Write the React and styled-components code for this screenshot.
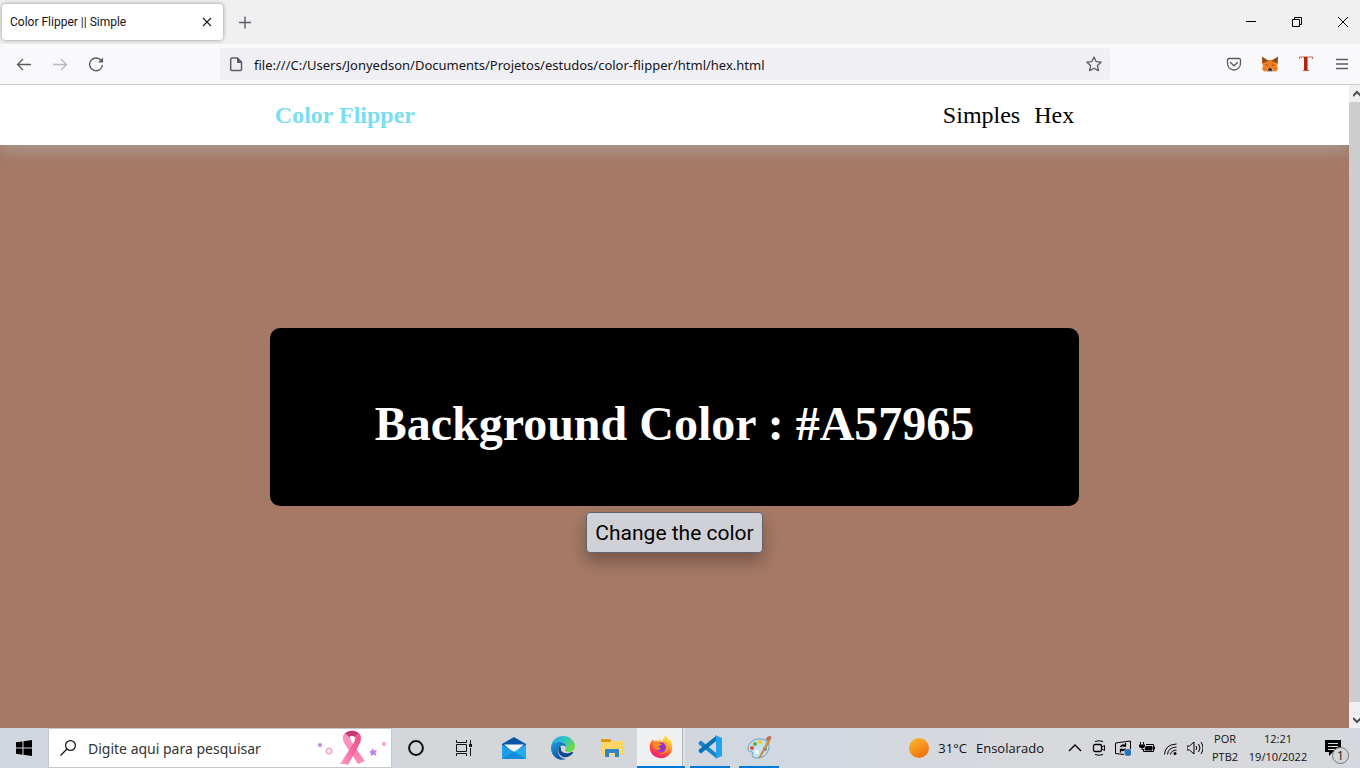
import React, { useState } from "react";
import styled, { createGlobalStyle } from "styled-components";

const GlobalStyle = createGlobalStyle`
  * { box-sizing: border-box; }
  body { margin: 0; background: #fff; font-family: "Open Sans", "Noto Sans", sans-serif; }
  button { border: 0; padding: 0; margin: 0; background: none; font: inherit; color: inherit; cursor: pointer; }
  input { border: 0; padding: 0; margin: 0; background: none; outline: 0; }
  svg { display: block; flex: none; }
`;

const Desktop = styled.div`
  display: flex;
  flex-direction: column;
  height: 100vh;
  padding-bottom: 6px;
  overflow: hidden;
`;

/* Browser chrome */
const TitleBar = styled.header`
  display: flex;
  align-items: center;
  flex: none;
  height: 44px;
  padding: 0 1px 0 2px;
  background: #f0f0f0;
`;
const Tab = styled.div`
  display: flex;
  align-items: center;
  width: 221px;
  height: 36px;
  padding: 0 8px;
  border-radius: 4px;
  background: #fff;
  box-shadow: 0 0 4px rgba(0, 0, 0, 0.4);
`;
const TabTitle = styled.span`
  flex: 1;
  font-family: Roboto, sans-serif;
  font-size: 12px;
  color: #15141a;
  white-space: nowrap;
`;
const IconButton = styled.button`
  display: flex;
  align-items: center;
  justify-content: center;
  flex: none;
  width: ${(p) => p.$size || 32}px;
  height: ${(p) => p.$size || 32}px;
  color: ${(p) => p.$color || "#5b5b66"};
`;
const NewTab = styled(IconButton)`
  margin-left: 6px;
`;
const WindowControls = styled.div`
  display: flex;
  gap: 14px;
  margin-left: auto;
`;
const ToolBar = styled.div`
  display: flex;
  align-items: center;
  flex: none;
  height: 41px;
  padding: 0 2px 0 8px;
  background: #f9f9fb;
  border-bottom: 1px solid #ccccd0;
`;
const ToolGroup = styled.div`
  display: flex;
  gap: 4px;
`;
const AddressBar = styled.label`
  display: flex;
  align-items: center;
  flex: 1;
  height: 32px;
  margin: 0 108px;
  border-radius: 4px;
  background: #f0f0f4;
  color: #5b5b66;
`;
const AddressInput = styled.input`
  flex: 1;
  min-width: 0;
  margin-left: 2px;
  padding-top: 2px;
  font-family: "Noto Sans", sans-serif;
  font-size: 13px;
  color: #15141a;
`;

/* Web page */
const Viewport = styled.div`
  display: flex;
  flex: 1;
  min-height: 0;
`;
const Page = styled.div`
  display: flex;
  flex-direction: column;
  flex: 1;
  background: #a57965;
  font-family: "Liberation Serif", serif;
`;
const NavBar = styled.nav`
  flex: none;
  background: #fff;
  box-shadow: 0 5px 15px rgba(176, 176, 176, 0.6);
  clip-path: inset(0 0 -24px 0);
`;
const NavContent = styled.div`
  display: flex;
  align-items: center;
  justify-content: space-between;
  width: 60%;
  height: 60px;
  margin: 0 auto;
  padding: 0 5px;
  font-size: 24px;
`;
const Brand = styled.span`
  font-weight: bold;
  color: #79def0;
`;
const NavLinks = styled.div`
  display: flex;
  gap: 14px;
`;
const NavLink = styled.a`
  color: #000;
  text-decoration: none;
`;
const Main = styled.main`
  display: flex;
  flex-direction: column;
  align-items: center;
  justify-content: center;
  flex: 1;
  gap: 6px;
  padding-top: 8px;
`;
const ColorCard = styled.section`
  display: flex;
  align-items: center;
  justify-content: center;
  width: 60%;
  height: 178px;
  padding-top: 14px;
  border-radius: 10px;
  background: #000;
`;
const ColorTitle = styled.h1`
  margin: 0;
  font-size: 48px;
  line-height: 56px;
  color: #fff;
  white-space: nowrap;
`;
const ChangeButton = styled.button`
  height: 41px;
  padding: 0 8px;
  border: 1px solid #64646e;
  border-radius: 4px;
  background: #d0d0d7;
  box-shadow: 0 8px 16px rgba(0, 0, 0, 0.3);
  font-family: Roboto, sans-serif;
  font-size: 21px;
  color: #000;
`;
const ScrollBar = styled.div`
  display: flex;
  flex-direction: column;
  flex: none;
  width: 11px;
  overflow: hidden;
  background: #f0f0f0;
`;
const ScrollThumb = styled.div`
  flex: 1;
  margin-bottom: 9px;
  background: #cdcdcd;
`;
const ScrollArrow = styled.button`
  display: flex;
  align-items: center;
  flex: none;
  height: 17px;
  padding-left: 4px;
  color: #505050;
`;

/* Taskbar */
const TaskBar = styled.footer`
  display: flex;
  align-items: center;
  flex: none;
  height: 40px;
  background: linear-gradient(90deg, #d0d7e0 0%, #d3d6da 28%, #d4d6d8 42%, #d1d8e2 57%, #d5d8dd 68%, #d8d9dc 85%, #d5d8dc 100%);
  color: #111;
  font-size: 13px;
`;
const StartButton = styled.button`
  display: flex;
  align-items: center;
  justify-content: center;
  width: 48px;
  height: 40px;
`;
const SearchBox = styled.label`
  display: flex;
  align-items: center;
  width: 344px;
  height: 40px;
  padding: 0 4px 0 11px;
  border: 1px solid #c4c6c8;
  background: #fff;
`;
const SearchInput = styled.input`
  flex: 1;
  min-width: 0;
  margin-left: 12px;
  font-family: "Noto Sans", sans-serif;
  font-size: 14px;
  color: #333;
  &::placeholder { color: #333; opacity: 1; }
`;
const Apps = styled.div`
  display: flex;
  margin-left: -1px;
`;
const AppButton = styled.button`
  display: flex;
  align-items: center;
  justify-content: center;
  width: 49px;
  height: 40px;
  background: ${(p) =>
    p.$active
      ? "linear-gradient(90deg, transparent 1px, #eef0f2 1px, #eef0f2 46px, #b4b8be 46px, #b4b8be 47px, #dde2e8 47px)"
      : "none"};
`;
const Running = styled.span`
  display: flex;
  align-items: center;
  justify-content: center;
  width: ${(p) => (p.$active ? "48px" : "40px")};
  flex: none;
  height: 40px;
  border-bottom: 2px solid #0078d7;
`;
const Weather = styled.button`
  display: flex;
  align-items: center;
  gap: 9px;
  margin-left: auto;
  margin-right: 19px;
  white-space: nowrap;
`;
const TrayIcons = styled.div`
  display: flex;
`;
const TrayText = styled.button`
  width: ${(p) => p.$width}px;
  font-family: "Open Sans", sans-serif;
  font-size: 11px;
  line-height: 18px;
  text-align: center;
  white-space: nowrap;
`;
const Notifications = styled.button`
  display: flex;
  position: relative;
  width: 30px;
  height: 40px;
  margin-left: 10px;
  margin-right: 7px;
  padding: 12px 0 0 2px;
`;
const Badge = styled.span`
  position: absolute;
  left: 9px;
  top: 19px;
  width: 17px;
  height: 17px;
  border: 1px solid #777;
  border-radius: 50%;
  background: #d3d5d8;
  font-size: 12px;
  line-height: 15px;
  text-align: center;
`;

const Icon = ({ size = 16, box = 16, width = 1, children }) => (
  <svg width={size} height={size} viewBox={`0 0 ${box} ${box}`} fill="none" stroke="currentColor" strokeWidth={width} aria-hidden="true">
    {children}
  </svg>
);

const Fox = () => (
  <svg width="18" height="18" viewBox="0 0 18 18" aria-hidden="true">
    <path d="M1 2 7 5h4l6-3 0 6-1 3 1 3-2 2.500-3-.5-1 1H7l-1-1-3 .5L1 14l1-3-1-3z" fill="#ed7d25" />
    <path d="M1 1.500 7.500 6 5 7 1.500 8zM17 1.500 10.500 6 13 7l3.500 1z" fill="#8c4a25" />
    <path d="m2 8 4 .5L7.500 13 2 11zM16 8l-4 .5L10.500 13l5.500-2z" fill="#f6851b" />
    <path d="m4 9 3 1-.5 1.500zM14 9l-3 1 .5 1.500z" fill="#8a4c24" />
    <path d="m6 14 1-1h4l1 1-1 3H7z" fill="#d7b99b" />
    <path d="m7 14 1-.7h2l1 .7-.3 1.800H7.300z" fill="#241b20" />
  </svg>
);

const Ribbon = () => (
  <svg width="70" height="36" viewBox="0 0 70 36" aria-hidden="true">
    <defs>
      <linearGradient id="rib" x1="0" y1="0" x2="1" y2="1">
        <stop offset="0" stopColor="#f0639b" /><stop offset="1" stopColor="#ff94c1" />
      </linearGradient>
      <linearGradient id="ribFront" x1="1" y1="0" x2="0" y2="1">
        <stop offset="0" stopColor="#e8518c" /><stop offset=".5" stopColor="#f4689f" /><stop offset="1" stopColor="#ffa0cb" />
      </linearGradient>
    </defs>
    <path d="M28 3q-4 5 0 11l13 20 7-3-13-18q-3-5-2-8z" fill="url(#rib)" />
    <path d="M28 3q-4 5 0 11l4 6 4-6q-4-5-3-9z" fill="#ff8fbe" />
    <path d="M28 3q7-5 14 0l-4 4q-3-2-6 0z" fill="#c63a72" />
    <path d="M42 3q4 5 0 12L31 35l-3-1-5 0 13-20q3-5 2-8z" fill="url(#ribFront)" />
    <circle cx="3" cy="15" r="2" fill="#bf83e8" />
    <circle cx="12" cy="21" r="2.700" fill="none" stroke="#ffa0c9" strokeWidth="1.600" />
    <path d="m55 18 2 2.500 3-.5-1.500 3 1 3-3-1.500-2.500 1.500-.2-3-2-1.300 2.700-.7z" fill="#bd83ea" />
    <circle cx="67" cy="14" r="2" fill="#ff9bca" />
  </svg>
);

const Mail = () => (
  <svg width="24" height="24" viewBox="0 0 24 24" aria-hidden="true">
    <path d="M0 8 12 1l12 7v2L12 19 0 10z" fill="#0756a8" />
    <path d="M2 8.500h20L12 17z" fill="#f5f6f8" />
    <path d="M0 8.500 24 23H0z" fill="#1f9ee9" />
    <path d="M24 8.500 0 23h24z" fill="#28aaf0" />
    <path d="m0 23 12-7.500L24 23z" fill="#168bdc" />
  </svg>
);

const Edge = () => (
  <svg width="24" height="24" viewBox="0 0 24 24" aria-hidden="true">
    <defs>
      <linearGradient id="edgeTop" x1="0" y1="0" x2="1" y2=".6">
        <stop offset="0" stopColor="#25a8e4" /><stop offset=".5" stopColor="#2bc3c9" /><stop offset="1" stopColor="#6edb45" />
      </linearGradient>
      <linearGradient id="edgeLow" x1="0" y1="0" x2=".8" y2="1">
        <stop offset="0" stopColor="#1ca0df" /><stop offset="1" stopColor="#0c479c" />
      </linearGradient>
    </defs>
    <path d="M0 12C0 5 5 0 12 0s12 5 12 10c0 4-3 6-6 6-3 0-4-1-4-2s1-1 1-3c0-3-3-5-7-5-5 0-8 3-8 6z" fill="url(#edgeTop)" />
    <path d="M0 12c0-4 3-6 8-6 4 0 7 2 7 5-1-1-2-1.500-3-1.500-3 0-5 2.500-5 5.500 0 5 4 8 8 8-8 3-15-3-15-11z" fill="url(#edgeLow)" />
    <path d="M9 10c-3 3-2 9 3 11 4 1 8-1 10-4 .5-1-.3-1.300-1-1-7 3-12 0-11-4z" fill="#104a91" />
  </svg>
);

const Folder = () => (
  <svg width="22" height="20" viewBox="0 0 22 20" aria-hidden="true">
    <path d="M0 1.500Q0 1 1 1h8l1.500 2L9 5H0z" fill="#d99b0b" />
    <path d="M0 4h9l2-1h10q1 0 1 1v13H0z" fill="#ffd766" />
    <path d="M4 19v-7q0-1 1-1h12q1 0 1 1v7h-4v-4H8v4z" fill="#2f84c8" />
  </svg>
);

const Firefox = () => (
  <svg width="24" height="24" viewBox="0 0 24 24" aria-hidden="true">
    <defs>
      <linearGradient id="ff" x1=".8" y1="0" x2=".3" y2="1">
        <stop offset="0" stopColor="#fff24f" /><stop offset=".35" stopColor="#ffb42e" /><stop offset=".65" stopColor="#ff5135" /><stop offset="1" stopColor="#ec168b" />
      </linearGradient>
      <radialGradient id="ffGlobe"><stop offset="0" stopColor="#6c35df" /><stop offset="1" stopColor="#a738c9" /></radialGradient>
    </defs>
    <path d="M4 4q0 2 1 2 2-1 4 0 2-2 3-2-1 2 0 3 3-3 4-7 3 2 4 6 1-1 1-2c3 5 3 11 0 15-5 6-14 5-18 0C-.5 14 0 8 4 4z" fill="url(#ff)" />
    <path d="M8 9q3-3 7-1 3 2 2 6-2 4-6 3-4-1-4-4z" fill="url(#ffGlobe)" />
    <path d="M4.500 7.500q4-1 5.500 1l3 .5q-1 2-3.500 2 .5 2 2.500 2.500-2 2.500-6 .5-3-2-1.500-6.500z" fill="#ff8a24" />
    <path d="M16 6q5 5 2 10-3 4-8 3 8-1 7-8-1-2-3-4z" fill="#ffa02e" />
  </svg>
);

const Code = () => (
  <svg width="24" height="24" viewBox="0 0 24 24" aria-hidden="true">
    <path d="m1 7 2-1.500L18 18v5L1 9.500Q0 8.500 1 7z" fill="#1683ca" />
    <path d="m1 17 2 1.500L18 6V1L1 14.500Q0 15.500 1 17z" fill="#0872b5" />
    <path d="M17 0l7 3v18l-7 3q1-1 1-3V3q0-2-1-3z" fill="#23a2ec" />
  </svg>
);

const Paint = () => (
  <svg width="26" height="24" viewBox="0 0 26 24" aria-hidden="true">
    <path d="M2 14C2 7 9 3 16 4c7 1 9 8 5 14-3 5-11 6-14 4-2-2 1-4-1-5-2-1-4 0-4-3z" fill="#c7e2ef" stroke="#6d9fba" />
    <circle cx="6" cy="13" r="2" fill="#e04b32" /><circle cx="9" cy="9" r="2" fill="#62ac3b" />
    <circle cx="14" cy="7" r="2" fill="#f0c532" /><circle cx="19" cy="14" r="2" fill="#4d8bd2" /><circle cx="11" cy="17" r="2" fill="#f4fbff" />
    <path d="m22 5 2 1-10 17-1-.5z" fill="#e89a3e" stroke="#b86e24" strokeWidth=".6" />
    <path d="M20 5q0-4 5-4 1 3-2 5z" fill="#b17746" />
  </svg>
);

const trayIcons = [
  ["Show hidden icons", <path d="m2 11 6-6 6 6" strokeWidth="1.300" />],
  ["Meet now", <g><rect x="2.500" y="4.500" width="8" height="7" rx="1.500" strokeWidth="1.300" /><path d="m11 7 2.500-1.500v5L11 9M4 1.500q4-1.500 8 0M4 14.500q4 1.500 8 0" /></g>],
  ["Updates", <g><path d="M9 14.500 .500 13.500V3L15.500 1v8" /><path d="M5.500 7q1.500-3 4.500-1.500M10.500 3v3h-3M10.500 8.500Q9 11.500 6 10M5.500 12.500v-3h3" strokeWidth="1.300" /><circle cx="13" cy="12.500" r="3.500" fill="#2674bc" stroke="none" /></g>],
  ["Battery", <g><path d="M7 4.500h7.500v7h-10V9" /><path d="M7 6.500h6v3.500H6z" fill="currentColor" /><path d="M15.500 6.500v3M1.500 2v2.500M4.500 2v2.500" /><path d="M0 4.500h6V6q0 2-3 2T0 6z" fill="currentColor" stroke="none" /><path d="M3 7v2.500h2" /></g>],
  ["Network", <g><path d="M1.500 14.500Q2 4.500 13.500 4M4.500 14.500Q5 7.500 13.500 7M7.500 14.500Q8 10.500 13.500 10" /><circle cx="12" cy="13.500" r="1.500" fill="currentColor" stroke="none" /></g>],
  ["Volume", <path d="M0 6h2.500L7 2v12l-4.500-4H0zM9 6q1.500 2 0 4M11.500 4q3 4 0 8M14 2q4 6 0 12" />],
];

const makeHex = () => {
  const n = Math.floor(Math.random() * 0x1000000);
  return `#${n.toString(16).padStart(6, "0").toUpperCase()}`;
};

export default function App() {
  const [color, setColor] = useState("#A57965");
  return (
    <Desktop>
      <GlobalStyle />
      <TitleBar>
        <Tab>
          <TabTitle>Color Flipper || Simple</TabTitle>
          <IconButton $size={16} $color="#222" aria-label="Close tab">
            <Icon><path d="m4 4 8 8m0-8-8 8" strokeWidth="1.200" /></Icon>
          </IconButton>
        </Tab>
        <NewTab aria-label="New tab"><Icon width={1.4}><path d="M8 2.500v12M2 8.500h12" /></Icon></NewTab>
        <WindowControls>
          <IconButton $color="#000" aria-label="Minimize"><Icon><path d="M3 7.500h10" /></Icon></IconButton>
          <IconButton $color="#000" aria-label="Restore"><Icon><path d="M3.500 5.500h7v7h-7zM5.500 5.500v-2h7v7h-2" /></Icon></IconButton>
          <IconButton $color="#000" aria-label="Close"><Icon><path d="m3 3 10 10m0-10L3 13" /></Icon></IconButton>
        </WindowControls>
      </TitleBar>
      <ToolBar>
        <ToolGroup>
          <IconButton aria-label="Back"><Icon width={1.3}><path d="M15 8.500H1.500M7 3 1.500 8.500 7 14" /></Icon></IconButton>
          <IconButton $color="#b9b9be" aria-label="Forward"><Icon width={1.3}><path d="M1 8.500h13.500M9 3l5.500 5.500L9 14" /></Icon></IconButton>
          <IconButton aria-label="Reload"><Icon width={1.4}><path d="M13.500 5A6.400 6.400 0 1 0 14.400 9" /><path d="M15 1.500V6.500H10z" fill="currentColor" stroke="none" /></Icon></IconButton>
        </ToolGroup>
        <AddressBar>
          <IconButton as="span">
            <Icon width={1.5}><path d="M4 2h5.500L13.500 6v7.200q0 1.300-1.300 1.300H4Q2.700 14.500 2.700 13.200V3.300Q2.700 2 4 2z" /><path d="M9 2v5h5z" fill="currentColor" stroke="none" /></Icon>
          </IconButton>
          <AddressInput aria-label="Address" readOnly value="file:///C:/Users/Jonyedson/Documents/Projetos/estudos/color-flipper/html/hex.html" />
          <IconButton aria-label="Bookmark this page">
            <Icon width={1.3}><path d="m8 1 2.100 4.600 5 .6-3.700 3.400 1 5L8 12.200l-4.400 2.400 1-5L.900 6.200l5-.6z" strokeLinejoin="round" /></Icon>
          </IconButton>
        </AddressBar>
        <ToolGroup>
          <IconButton aria-label="Pocket"><Icon width={1.3}><path d="M3 2.500h10q1.500 0 1.500 1.500v3.500a6.500 6.500 0 0 1-13 0V4Q1.500 2.500 3 2.500zM4.500 6.500 8 9.800l3.500-3.300" strokeLinecap="round" /></Icon></IconButton>
          <IconButton aria-label="Wallet"><Fox /></IconButton>
          <IconButton $color="#b9321c" aria-label="Text extension">
            <svg width="16" height="18" viewBox="0 0 16 18" aria-hidden="true">
              <path d="M1.500 4V2h13v2" fill="none" stroke="#cb6253" />
              <rect x="6" y="2" width="3" height="14" fill="#b9250c" /><rect x="9" y="2" width="1" height="14" fill="#dc7565" /><rect x="5" y="15" width="6" height="1" fill="#c9503c" />
            </svg>
          </IconButton>
          <IconButton aria-label="Open menu"><Icon width={1.3}><path d="M2 3.500h12M2 8h12M2 12.500h12" /></Icon></IconButton>
        </ToolGroup>
      </ToolBar>
      <Viewport>
        <Page style={{ backgroundColor: color }}>
          <NavBar>
            <NavContent>
              <Brand>Color Flipper</Brand>
              <NavLinks>
                <NavLink href="#simples">Simples</NavLink>
                <NavLink href="#hex">Hex</NavLink>
              </NavLinks>
            </NavContent>
          </NavBar>
          <Main>
            <ColorCard><ColorTitle>Background Color : {color}</ColorTitle></ColorCard>
            <ChangeButton onClick={() => setColor(makeHex())}>Change the color</ChangeButton>
          </Main>
        </Page>
        <ScrollBar>
          <ScrollArrow aria-label="Scroll up"><Icon size={8} box={8} width={2}><path d="M0 6l4-4 4 4" /></Icon></ScrollArrow>
          <ScrollThumb />
          <ScrollArrow aria-label="Scroll down"><Icon size={8} box={8} width={2}><path d="M0 2l4 4 4-4" /></Icon></ScrollArrow>
        </ScrollBar>
      </Viewport>
      <TaskBar>
        <StartButton aria-label="Start">
          <svg width="16" height="16" viewBox="0 0 16 16" aria-hidden="true"><path d="M0 2.300 6.500 1.400v6.200H0zM7.500 1.200 16 0v7.600H7.500zM0 8.500h6.500v6.200L0 13.800zM7.500 8.500H16V16l-8.500-1.200z" /></svg>
        </StartButton>
        <SearchBox>
          <Icon width={1.2}><circle cx="10.500" cy="5.500" r="4.900" /><path d="M7 9 .500 15.500" /></Icon>
          <SearchInput aria-label="Search" placeholder="Digite aqui para pesquisar" />
          <Ribbon />
        </SearchBox>
        <Apps>
          <AppButton aria-label="Cortana"><Icon width={2}><circle cx="8" cy="8" r="6.900" /></Icon></AppButton>
          <AppButton aria-label="Task view"><Icon size={18} box={18}><path d="M.500 1v2.500h10V1M.500 5.500h10v7H.500zM.500 17v-2.500h10V17M14.500 1v4M14.500 9v8" /><path d="M13 5h3v3h-3z" fill="currentColor" stroke="none" /></Icon></AppButton>
          <AppButton aria-label="Mail"><Mail /></AppButton>
          <AppButton aria-label="Edge"><Edge /></AppButton>
          <AppButton aria-label="File Explorer"><Folder /></AppButton>
          <AppButton $active aria-label="Firefox"><Running $active><Firefox /></Running></AppButton>
          <AppButton aria-label="Visual Studio Code"><Running><Code /></Running></AppButton>
          <AppButton aria-label="Paint"><Running><Paint /></Running></AppButton>
        </Apps>
        <Weather>
          <svg width="20" height="20" viewBox="0 0 20 20" aria-hidden="true">
            <defs><linearGradient id="sun" x1=".2" y1="0" x2=".8" y2="1"><stop offset="0" stopColor="#f9b72d" /><stop offset="1" stopColor="#f26b0c" /></linearGradient></defs>
            <circle cx="10" cy="10" r="10" fill="url(#sun)" />
          </svg>
          <span>31°C</span>
          <span>Ensolarado</span>
        </Weather>
        <TrayIcons>
          {trayIcons.map(([label, drawing]) => (
            <IconButton key={label} $size={24} $color="#000" aria-label={label}><Icon>{drawing}</Icon></IconButton>
          ))}
        </TrayIcons>
        <TrayText $width={36}>POR<br />PTB2</TrayText>
        <TrayText $width={70}>12:21<br />19/10/2022</TrayText>
        <Notifications aria-label="Notifications">
          <svg width="16" height="16" viewBox="0 0 16 16" aria-hidden="true"><path d="M0 0h16v12H8l-4 4v-4H0z" /><path d="M3 3.500h10M3 6.500h10M3 9.500h7" stroke="#d5d8dc" /></svg>
          <Badge>1</Badge>
        </Notifications>
      </TaskBar>
    </Desktop>
  );
}
